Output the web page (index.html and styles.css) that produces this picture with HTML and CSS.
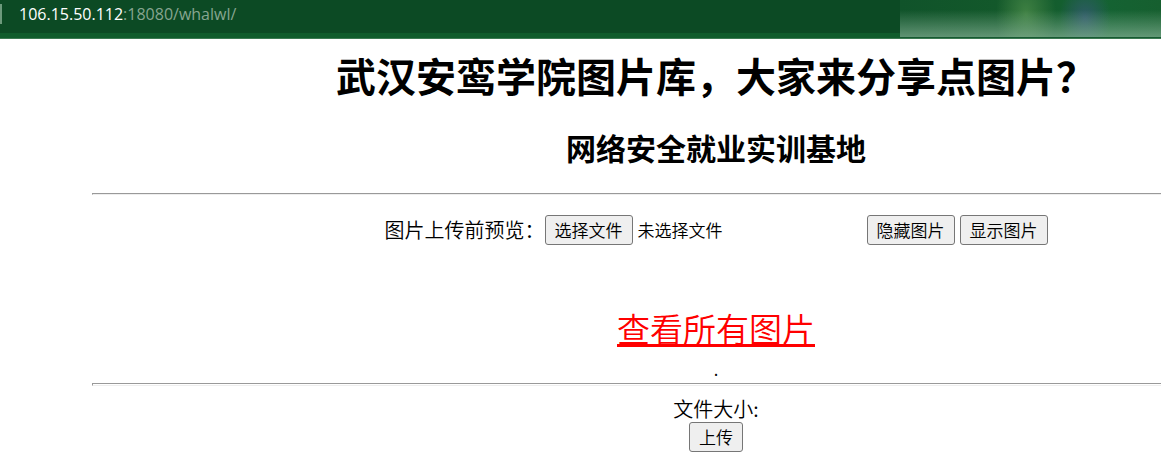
FILE: index.html
```html
<!DOCTYPE html>
<html lang="zh-CN">
<head>
<meta charset="utf-8">
<title>武汉安鸾学院图片库</title>
<link rel="stylesheet" href="styles.css">
</head>
<body>
<header class="browser-bar">
  <span class="bar-divider"></span>
  <span class="address"><span class="address-host">106.15.50.112</span>:18080/whalwl/</span>
  <span class="bar-blur"></span>
</header>
<main class="page">
  <h1 class="title">武汉安鸾学院图片库，大家来分享点图片？</h1>
  <h2 class="subtitle">网络安全就业实训基地</h2>
  <hr class="rule">
  <form class="upload-form">
    <div class="preview-row">
      <label for="picture">图片上传前预览：</label>
      <div class="file-field">
        <input class="file-input" type="file" id="picture" accept="image/*">
        <label class="button" for="picture">选择文件</label>
        <span class="file-name">未选择文件</span>
      </div>
      <div class="actions">
        <button class="button" type="button">隐藏图片</button>
        <button class="button" type="button">显示图片</button>
      </div>
    </div>
    <a class="gallery-link" href="#">查看所有图片</a>
    <div class="dot">.</div>
    <hr class="rule">
    <div class="size-label">文件大小:</div>
    <button class="button" type="submit">上传</button>
  </form>
</main>
</body>
</html>
```
FILE: styles.css
```css
body {
  margin: 0;
  overflow: hidden;
  background: #fff;
  color: #000;
  font: 350 20px/26px "Noto Sans CJK SC", sans-serif;
}

.browser-bar {
  display: flex;
  box-sizing: border-box;
  height: 39px;
  background: linear-gradient(#0c4a24 33px, #105c2c 33px, #105c2c 38px, #3c7a52 38px);
}

.bar-divider {
  width: 2px;
  height: 20px;
  margin-top: 4px;
  background: #6d9a7c;
}

.address {
  flex: 1;
  padding-left: 17px;
  color: #86a590;
  font: 400 16px/28px "Open Sans", "Noto Sans", sans-serif;
}

.address-host {
  color: #fff;
}

.bar-blur {
  width: 261px;
  height: 38px;
  background:
    linear-gradient(transparent 10px, rgba(150, 190, 165, 0.6) 37px, #175a32 37px),
    radial-gradient(ellipse 30px 50px at 126px 14px, #3f8143, transparent),
    radial-gradient(ellipse 26px 34px at 185px 18px, #2f5a68, transparent),
    linear-gradient(90deg, #10532a, #145a2b 50%, #146333 75%, #165f2f);
}

.page {
  display: flex;
  flex-direction: column;
  margin: 0 -179px 0 92px;
  text-align: center;
}

.title {
  margin: 12px 0 0;
  font-size: 40px;
  line-height: 48px;
}

.subtitle {
  margin: 28px 0 0;
  font-size: 30px;
  line-height: 40px;
}

.rule {
  box-sizing: border-box;
  width: 100%;
  height: 2px;
  margin: 26px 0 0;
  border: 1px solid #eee;
  border-top-color: #999;
  border-left-color: #999;
}

.upload-form {
  display: flex;
  flex-direction: column;
  align-items: center;
  margin-top: 20px;
}

.preview-row {
  display: flex;
  align-items: center;
}

.file-field {
  position: relative;
  display: flex;
  align-items: center;
  gap: 5px;
  width: 322px;
}

.file-input {
  position: absolute;
  width: 1px;
  height: 1px;
  opacity: 0;
}

.file-name {
  font-size: 17px;
}

.actions {
  display: flex;
  gap: 5px;
}

.button {
  box-sizing: border-box;
  padding: 0 9px;
  border: 1px solid #767676;
  border-radius: 3px;
  background: #efefef;
  color: #000;
  font: 350 17px/28px "Noto Sans CJK SC", sans-serif;
}

.gallery-link {
  margin-top: 61px;
  color: #f00;
  font-size: 33px;
  line-height: 44px;
  text-decoration-thickness: 3px;
  text-underline-offset: 2px;
}

.dot {
  margin-top: 9px;
  font-size: 17px;
  line-height: 20px;
}

.upload-form .rule {
  height: 3px;
  margin-top: 4px;
}

.size-label {
  margin-top: 10px;
}
```
